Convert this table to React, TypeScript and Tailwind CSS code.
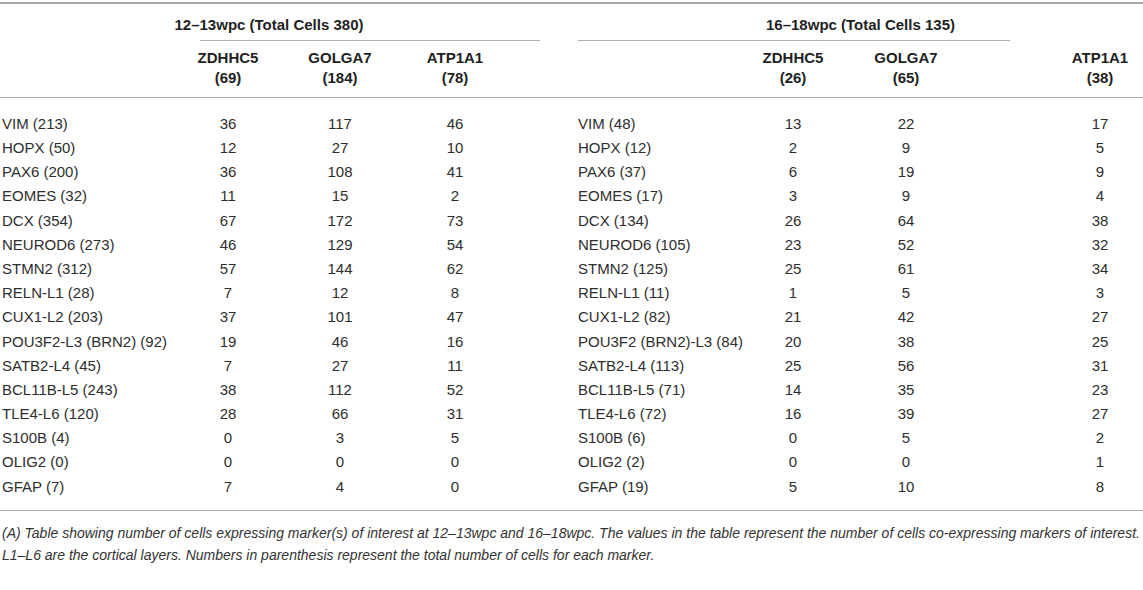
import React from 'react';

type Row = [string, number, number, number, string, number, number, number];

const rows: Row[] = [
  ['VIM (213)', 36, 117, 46, 'VIM (48)', 13, 22, 17],
  ['HOPX (50)', 12, 27, 10, 'HOPX (12)', 2, 9, 5],
  ['PAX6 (200)', 36, 108, 41, 'PAX6 (37)', 6, 19, 9],
  ['EOMES (32)', 11, 15, 2, 'EOMES (17)', 3, 9, 4],
  ['DCX (354)', 67, 172, 73, 'DCX (134)', 26, 64, 38],
  ['NEUROD6 (273)', 46, 129, 54, 'NEUROD6 (105)', 23, 52, 32],
  ['STMN2 (312)', 57, 144, 62, 'STMN2 (125)', 25, 61, 34],
  ['RELN-L1 (28)', 7, 12, 8, 'RELN-L1 (11)', 1, 5, 3],
  ['CUX1-L2 (203)', 37, 101, 47, 'CUX1-L2 (82)', 21, 42, 27],
  ['POU3F2-L3 (BRN2) (92)', 19, 46, 16, 'POU3F2 (BRN2)-L3 (84)', 20, 38, 25],
  ['SATB2-L4 (45)', 7, 27, 11, 'SATB2-L4 (113)', 25, 56, 31],
  ['BCL11B-L5 (243)', 38, 112, 52, 'BCL11B-L5 (71)', 14, 35, 23],
  ['TLE4-L6 (120)', 28, 66, 31, 'TLE4-L6 (72)', 16, 39, 27],
  ['S100B (4)', 0, 3, 5, 'S100B (6)', 0, 5, 2],
  ['OLIG2 (0)', 0, 0, 0, 'OLIG2 (2)', 0, 0, 1],
  ['GFAP (7)', 7, 4, 0, 'GFAP (19)', 5, 10, 8],
];

const cols = 'grid grid-cols-[170px_116px_108px_122px_62px_162px_106px_120px_91px_86px]';

const App: React.FC = () => {
  return (
    <div className="w-[1143px] h-[590px] bg-white text-[#2e2e2e] font-['Liberation_Sans',Arial,sans-serif] overflow-hidden">
      <div className="mt-[2px] border-t-2 border-[#a9a9a9]" />

      {/* group headers */}
      <div className="flex font-bold text-[15px] text-[#1f1f1f]">
        <div className="w-[578px] flex flex-col">
          <div className="h-[36px] pt-[11px] leading-5 text-center pr-[40px]">12–13wpc (Total Cells 380)</div>
          <div className="ml-[200px] w-[340px] border-b border-[#b0b0b0]" />
        </div>
        <div className="w-[565px] flex flex-col">
          <div className="h-[36px] pt-[11px] leading-5 text-center">16–18wpc (Total Cells 135)</div>
          <div className="w-[432px] border-b border-[#b0b0b0]" />
        </div>
      </div>

      {/* marker headers */}
      <div className={`${cols} font-bold text-[15px] leading-5 text-[#1f1f1f] pt-[7px] pb-[9px] border-b border-[#a9a9a9]`}>
        <div />
        <div className="text-center">ZDHHC5<br />(69)</div>
        <div className="text-center">GOLGA7<br />(184)</div>
        <div className="text-center">ATP1A1<br />(78)</div>
        <div />
        <div />
        <div className="text-center">ZDHHC5<br />(26)</div>
        <div className="text-center">GOLGA7<br />(65)</div>
        <div />
        <div className="text-center">ATP1A1<br />(38)</div>
      </div>

      {/* body */}
      <div className="pt-[14px] pb-[11px] border-b border-[#a9a9a9] text-[15px]">
        {rows.map((r) => (
          <div key={r[0]} className={`${cols} h-[24.2px] items-center`}>
            <div className="pl-[2px] whitespace-nowrap">{r[0]}</div>
            <div className="text-center">{r[1]}</div>
            <div className="text-center">{r[2]}</div>
            <div className="text-center">{r[3]}</div>
            <div />
            <div className="whitespace-nowrap">{r[4]}</div>
            <div className="text-center">{r[5]}</div>
            <div className="text-center">{r[6]}</div>
            <div />
            <div className="text-center">{r[7]}</div>
          </div>
        ))}
      </div>

      <p className="mt-[11px] px-[2px] text-[14px] leading-[22px] italic text-[#333]">
        (A) Table showing number of cells expressing marker(s) of interest at 12–13wpc and 16–18wpc. The values in the table represent the number of cells co-expressing markers of interest. L1–L6 are the cortical layers. Numbers in parenthesis represent the total number of cells for each marker.
      </p>
    </div>
  );
};

export default App;
